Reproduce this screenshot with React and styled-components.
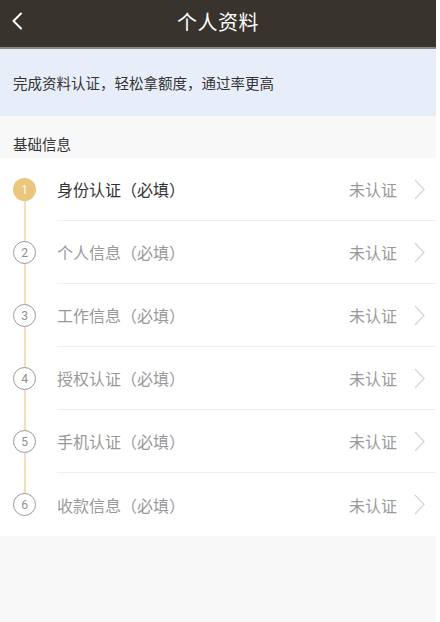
import React from 'react';
import styled, { createGlobalStyle } from 'styled-components';

const GlobalStyle = createGlobalStyle`
  html, body {
    margin: 0;
    padding: 0;
    background: #ffffff;
  }
  body {
    font-family: "Noto Sans CJK SC", "Noto Sans", sans-serif;
  }
`;

const steps = [
    { no: 1, title: '身份认证（必填）', active: true },
    { no: 2, title: '个人信息（必填）' },
    { no: 3, title: '工作信息（必填）' },
    { no: 4, title: '授权认证（必填）' },
    { no: 5, title: '手机认证（必填）' },
    { no: 6, title: '收款信息（必填）' },
];

const App = () => {
  return (
    <>
      <GlobalStyle />
      <Page>
        <Header>
          <BackButton>
            <svg width="12" height="18" viewBox="0 0 12 18">
              <path d="M10 1.5 L2.5 9 L10 16.5" fill="none" stroke="#fff" strokeWidth="2" strokeLinecap="round" strokeLinejoin="round" />
            </svg>
          </BackButton>
          <Title>个人资料</Title>
        </Header>
        <Banner>完成资料认证，轻松拿额度，通过率更高</Banner>
        <SectionLabel>基础信息</SectionLabel>
        <List>
          {steps.map((s, i) => (
            <Row key={s.no}>
              <Marker first={i === 0} last={i === steps.length - 1}>
                <Circle active={s.active}>{s.no}</Circle>
              </Marker>
              <RowBody last={i === steps.length - 1}>
                <RowTitle active={s.active}>{s.title}</RowTitle>
                <Status>未认证</Status>
                <Chevron>
                  <svg width="11" height="21" viewBox="0 0 11 21">
                    <path d="M1 1 L10 10.5 L1 20" fill="none" stroke="#d6d6d6" strokeWidth="1.3" />
                  </svg>
                </Chevron>
              </RowBody>
            </Row>
          ))}
        </List>
        <Filler />
      </Page>
    </>
  )
}

export default App;

const Page = styled.div`
    width: 436px;
    height: 622px;
    display: flex;
    flex-direction: column;
    background-color: #f8f8f8;
`;

const Header = styled.div`
    height: 47px;
    flex-shrink: 0;
    background-color: #38332d;
    border-bottom: 2px solid #8a8784;
    display: flex;
    align-items: center;
    justify-content: center;
    position: relative;
`;

const BackButton = styled.div`
    position: absolute;
    left: 11px;
    top: 12px;
    display: flex;
`;

const Title = styled.div`
    color: #ffffff;
    font-size: 20px;
    letter-spacing: 0.5px;
    margin-top: -4px;
`;

const Banner = styled.div`
    height: 67px;
    flex-shrink: 0;
    background-color: #e8eef9;
    color: #333333;
    font-size: 14.5px;
    padding-left: 13px;
    display: flex;
    align-items: center;
`;

const SectionLabel = styled.div`
    height: 42px;
    flex-shrink: 0;
    box-sizing: border-box;
    padding: 18px 0 0 13px;
    color: #333333;
    font-size: 14.5px;
    line-height: 20px;
`;

const List = styled.div`
    background-color: #ffffff;
    display: flex;
    flex-direction: column;
`;

const Row = styled.div`
    height: 63px;
    display: flex;
`;

const Marker = styled.div`
    width: 57px;
    flex-shrink: 0;
    display: flex;
    align-items: center;
    padding-left: 13px;
    box-sizing: border-box;
    position: relative;

    &::before {
        content: '';
        position: absolute;
        left: 24px;
        width: 1.5px;
        top: ${({ first }) => (first ? '50%' : '0')};
        bottom: ${({ last }) => (last ? '50%' : '0')};
        background-color: #f6ddbb;
    }
`;

const Circle = styled.div`
    width: 23px;
    height: 23px;
    box-sizing: border-box;
    border-radius: 50%;
    display: flex;
    align-items: center;
    justify-content: center;
    font-family: "Roboto", "Noto Sans", sans-serif;
    font-size: 12px;
    position: relative;
    z-index: 1;
    background-color: ${({ active }) => (active ? '#ebc67e' : '#ffffff')};
    color: ${({ active }) => (active ? '#ffffff' : '#8f8f8f')};
    border: ${({ active }) => (active ? 'none' : '1.5px solid #9a9a9a')};
`;

const RowBody = styled.div`
    flex: 1;
    display: flex;
    align-items: center;
    border-bottom: ${({ last }) => (last ? 'none' : '1px solid #eeeeee')};
    padding-right: 11px;
`;

const RowTitle = styled.div`
    flex: 1;
    font-size: 16px;
    color: ${({ active }) => (active ? '#333333' : '#999999')};
`;

const Status = styled.div`
    font-size: 16px;
    color: #999999;
    margin-right: 17px;
`;

const Chevron = styled.div`
    display: flex;
`;

const Filler = styled.div`
    flex: 1;
    background-color: #f8f8f8;
`;
